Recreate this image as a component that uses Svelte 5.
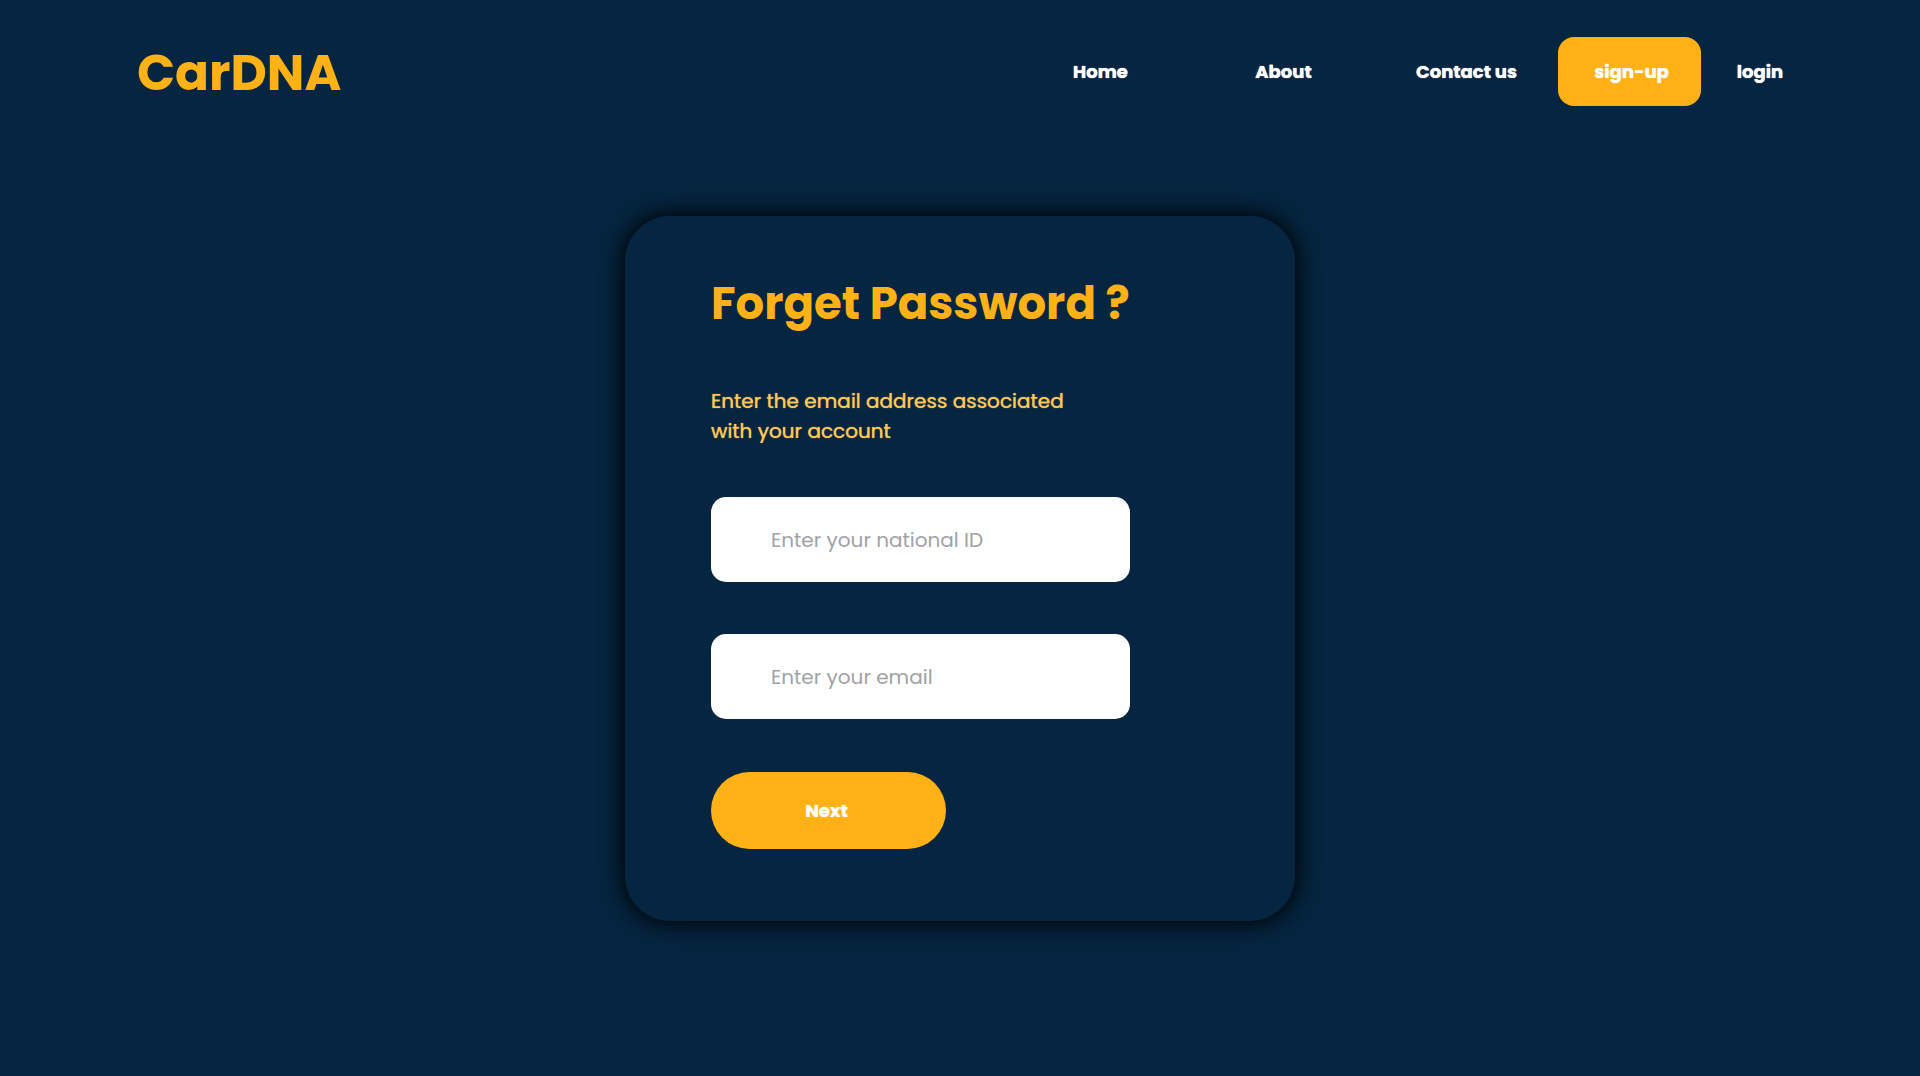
<script>
  const links = [
    { label: 'Home', href: '#home' },
    { label: 'About', href: '#about' },
    { label: 'Contact us', href: '#contact' }
  ];
  let nationalId = $state('');
  let email = $state('');
</script>

<div class="page">
  <header>
    <a class="logo" href="#home">CarDNA</a>
    <nav aria-label="Main">
      {#each links as link}
        <a class="link" href={link.href}>{link.label}</a>
      {/each}
      <a class="signup" href="#sign-up">sign-up</a>
      <a class="login" href="#login">login</a>
    </nav>
  </header>

  <main>
    <form class="card" onsubmit={(e) => e.preventDefault()}>
      <h1>Forget Password ?</h1>
      <p>Enter the email address associated with your account</p>
      <div class="fields">
        <input type="text" aria-label="National ID" placeholder="Enter your national ID" bind:value={nationalId} />
        <input type="email" aria-label="Email" placeholder="Enter your email" bind:value={email} />
      </div>
      <button type="submit">Next</button>
    </form>
  </main>
</div>

<style>
  :global(body) {
    margin: 0;
    background: #052540;
  }
  .page {
    min-height: 100vh;
    box-sizing: border-box;
    background: #052540;
    color: #fff;
    font-family: Poppins, Inter, sans-serif;
  }
  header {
    display: flex;
    align-items: center;
    justify-content: space-between;
    padding: 37px 101px 0 137px;
  }
  a {
    color: #fff;
    text-decoration: none;
  }
  .logo {
    padding-top: 2px;
    color: #ffb116;
    font-size: 50px;
    line-height: 60px;
    font-weight: 700;
  }
  nav {
    display: flex;
    align-items: center;
    font-size: 18px;
    line-height: 28px;
    font-weight: 700;
    text-align: center;
    text-shadow: 0 0 1px currentColor;
  }
  .link {
    width: 183px;
  }
  .signup {
    box-sizing: border-box;
    width: 143px;
    padding: 21px 0 20px 4px;
    border-radius: 16px;
    background: #ffb116;
  }
  .login {
    width: 118px;
  }
  main {
    display: flex;
    justify-content: center;
    padding: 110px 24px 48px;
  }
  .card {
    box-sizing: border-box;
    width: 100%;
    max-width: 670px;
    padding: 57px 86px 72px;
    border-radius: 45px;
    box-shadow: 0 0 24px 2px #000;
    background: #052540;
  }
  h1 {
    margin: 0 0 51px;
    color: #ffb116;
    font-size: 45px;
    line-height: 62px;
    font-weight: 700;
  }
  p {
    max-width: 380px;
    margin: 0 0 51px;
    color: #ffc957;
    font-size: 20px;
    line-height: 30px;
    text-shadow: 0 0 1px currentColor;
  }
  .fields {
    display: grid;
    gap: 52px;
    max-width: 419px;
    margin-bottom: 53px;
  }
  input {
    box-sizing: border-box;
    width: 100%;
    height: 85px;
    padding: 0 60px;
    border: 0;
    border-radius: 15px;
    background: #fff;
    color: #052540;
    font: inherit;
    font-size: 20px;
  }
  input::placeholder {
    color: #a1a1a6;
    opacity: 1;
  }
  button {
    display: block;
    width: 235px;
    height: 77px;
    padding: 0 4px 0 0;
    border: 0;
    border-radius: 40px;
    background: #ffb116;
    color: #fff;
    font: inherit;
    font-size: 18px;
    font-weight: 700;
    text-shadow: 0 0 1px currentColor;
    cursor: pointer;
  }
</style>
